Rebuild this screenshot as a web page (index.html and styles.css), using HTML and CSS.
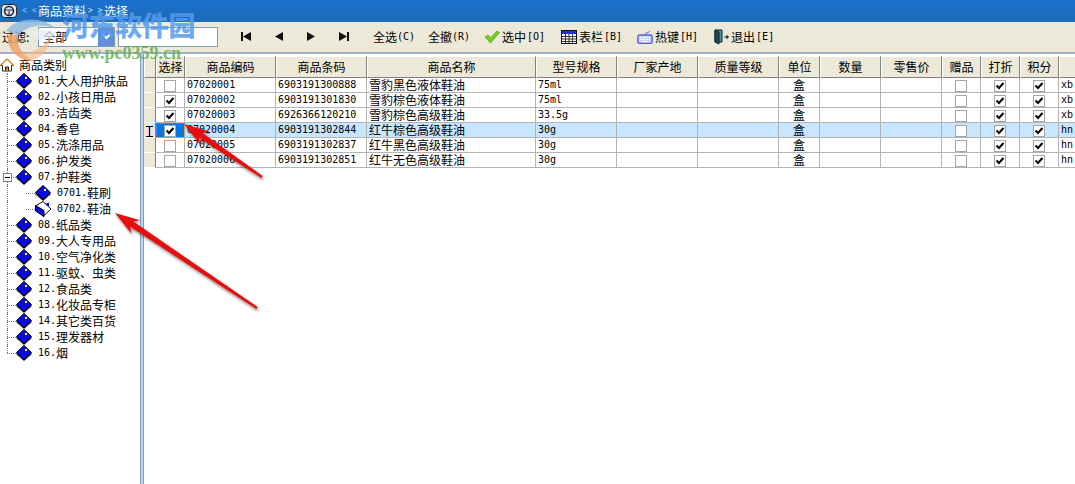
FILE: index.html
```html
<!DOCTYPE html>
<html lang="zh-CN">
<head>
<meta charset="utf-8">
<title>商品资料选择</title>
<link rel="stylesheet" href="styles.css">
</head>
<body>
<svg class="defs" width="0" height="0">
  <defs>
    <symbol id="gem" viewBox="0 0 18 16">
      <path d="M9 3 L17 9 L9 16 L1 9Z" fill="#222"/>
      <path d="M9 0.5 L16.5 7.5 L9 14.5 L1.5 7.5Z" fill="#0a0ae6" stroke="#000" stroke-width="1"/>
      <rect x="10" y="4" width="2" height="2" fill="#fff"/>
    </symbol>
    <symbol id="tick" viewBox="0 0 12 12">
      <rect x=".5" y=".5" width="11" height="11" fill="#fff" stroke="#a6a6a6"/>
      <path d="M2.5 5.5 L5 8 L9.5 3" fill="none" stroke="#000" stroke-width="2"/>
    </symbol>
    <symbol id="box" viewBox="0 0 12 12">
      <rect x=".5" y=".5" width="11" height="11" fill="#fff" stroke="#a6a6a6"/>
    </symbol>
  </defs>
</svg>

<header class="titlebar">
  <svg class="app-icon" width="16" height="14" viewBox="0 0 16 14"><rect x=".5" y=".5" width="15" height="13" rx="3" fill="#dfe6ee" stroke="#222"/><circle cx="8" cy="7" r="4.5" fill="none" stroke="#223" stroke-width="1.5"/><path d="M3.5 6h9M8 7v4" stroke="#223"/></svg>
  <span class="crumb-dim">&lt; &lt;</span><span class="zh">商品资料</span><span class="crumb-mid">&gt; &gt;</span><span class="zh">选择</span>
</header>

<div class="toolbar">
  <span class="zh filter-label">过滤:</span>
  <div class="combo"><span class="zh combo-text">全部</span><span class="combo-btn"><svg width="9" height="7" viewBox="0 0 9 7"><path d="M1 1.5 L4.5 5 L8 1.5" fill="none" stroke="#fff" stroke-width="2"/></svg></span></div>
  <div class="search"></div>
  <nav class="pager">
    <svg width="12" height="9" viewBox="0 0 12 9"><path d="M1 0h2v9H1zM11 0v9L3 4.500z" fill="#111"/></svg>
    <svg width="10" height="9" viewBox="0 0 10 9"><path d="M9 0v9L1 4.500z" fill="#111"/></svg>
    <svg width="10" height="9" viewBox="0 0 10 9"><path d="M1 0v9l8-4.500z" fill="#111"/></svg>
    <svg width="12" height="9" viewBox="0 0 12 9"><path d="M1 0v9l8-4.500zM9 0h2v9H9z" fill="#111"/></svg>
  </nav>
  <div class="actions">
    <span class="act"><span class="zh">全选</span><span class="lat">(C)</span></span>
    <span class="act"><span class="zh">全撤</span><span class="lat">(R)</span></span>
    <span class="act act-icon"><svg width="16" height="14" viewBox="0 0 16 14"><path d="M1 7 L4 5 L6.500 8 L13 1 L15.500 2.500 L6.500 13Z" fill="#6fd21e" stroke="#4a9c18" stroke-width=".7"/></svg><span class="zh">选中</span><span class="lat">[O]</span></span>
    <span class="act act-icon"><svg width="16" height="14" viewBox="0 0 16 14"><rect x=".5" y=".5" width="15" height="13" fill="#fff" stroke="#111"/><rect x="1" y="1" width="14" height="3" fill="#2230d8"/><path d="M1 6.500h14M1 9h14M1 11.500h14M4.500 4v9M8 4v9M11.500 4v9" stroke="#333"/></svg><span class="zh">表栏</span><span class="lat">[B]</span></span>
    <span class="act act-icon"><svg width="16" height="14" viewBox="0 0 16 14"><path d="M8 5 C8 2 11 4 13 1" fill="none" stroke="#5a66d0"/><rect x=".8" y="5" width="14.400" height="8.500" rx="2" fill="#c9d0f4" stroke="#5a66d0" stroke-width="1.400"/><path d="M3 7.500h10M3 9.500h10" stroke="#fff" stroke-dasharray="1.500 .7"/><path d="M5 11.500h6" stroke="#fff"/></svg><span class="zh">热键</span><span class="lat">[H]</span></span>
    <span class="act act-icon"><svg width="15" height="16" viewBox="0 0 15 16"><path d="M1 1h7v12H1z" fill="#4f8f96" stroke="#123"/><path d="M1 1l4 2v12l-4-2z" fill="#224a55" stroke="#123"/><path d="M10 7.500h2.500V5.500L15 8l-2.500 2.500v-2H10z" fill="#223"/></svg><span class="zh">退出</span><span class="lat">[E]</span></span>
  </div>
</div>

<main class="main">
  <aside class="tree">
    <div class="tree-root"><svg width="14" height="14" viewBox="0 0 14 14"><path d="M7 1 L13.500 7.500 H11.500 V13 H2.500 V7.500 H.5Z" fill="#fff" stroke="#222"/><path d="M5.500 13V9h3v4" fill="#e88a20" stroke="#222"/><path d="M7 1 L.5 7.500M7 1l6.500 6.500" stroke="#e0781c" stroke-width="1.400"/></svg><span class="zh">商品类别</span></div>
    <div class="node"><svg class="gem"><use href="#gem"/></svg><span class="lat">01.</span><span class="zh">大人用护肤品</span></div>
    <div class="node"><svg class="gem"><use href="#gem"/></svg><span class="lat">02.</span><span class="zh">小孩日用品</span></div>
    <div class="node"><svg class="gem"><use href="#gem"/></svg><span class="lat">03.</span><span class="zh">洁齿类</span></div>
    <div class="node"><svg class="gem"><use href="#gem"/></svg><span class="lat">04.</span><span class="zh">香皂</span></div>
    <div class="node"><svg class="gem"><use href="#gem"/></svg><span class="lat">05.</span><span class="zh">洗涤用品</span></div>
    <div class="node"><svg class="gem"><use href="#gem"/></svg><span class="lat">06.</span><span class="zh">护发类</span></div>
    <div class="node node-open"><span class="toggle"></span><svg class="gem"><use href="#gem"/></svg><span class="lat">07.</span><span class="zh">护鞋类</span></div>
    <div class="node child"><svg class="gem"><use href="#gem"/></svg><span class="lat">0701.</span><span class="zh">鞋刷</span></div>
    <div class="node child child-last"><svg class="gem" viewBox="0 0 18 16"><path d="M1.500 5 L9 .5 L17 8 L9 15.500Z" fill="#fff" stroke="#000"/><path d="M1.500 4.500 L10 9.500 L10 15.500 L1.500 10Z" fill="#0a0ae6" stroke="#000"/><path d="M11 3l4-1.500v4z" fill="#0a0ae6"/></svg><span class="lat">0702.</span><span class="zh">鞋油</span></div>
    <div class="node"><svg class="gem"><use href="#gem"/></svg><span class="lat">08.</span><span class="zh">纸品类</span></div>
    <div class="node"><svg class="gem"><use href="#gem"/></svg><span class="lat">09.</span><span class="zh">大人专用品</span></div>
    <div class="node"><svg class="gem"><use href="#gem"/></svg><span class="lat">10.</span><span class="zh">空气净化类</span></div>
    <div class="node"><svg class="gem"><use href="#gem"/></svg><span class="lat">11.</span><span class="zh">驱蚊、虫类</span></div>
    <div class="node"><svg class="gem"><use href="#gem"/></svg><span class="lat">12.</span><span class="zh">食品类</span></div>
    <div class="node"><svg class="gem"><use href="#gem"/></svg><span class="lat">13.</span><span class="zh">化妆品专柜</span></div>
    <div class="node"><svg class="gem"><use href="#gem"/></svg><span class="lat">14.</span><span class="zh">其它类百货</span></div>
    <div class="node"><svg class="gem"><use href="#gem"/></svg><span class="lat">15.</span><span class="zh">理发器材</span></div>
    <div class="node node-last"><svg class="gem"><use href="#gem"/></svg><span class="lat">16.</span><span class="zh">烟</span></div>
  </aside>
  <div class="splitter"></div>
  <section class="grid-wrap">
    <table class="grid">
      <colgroup>
        <col class="c-ind"><col class="c-sel"><col class="c-code"><col class="c-code"><col class="c-name"><col class="c-spec"><col class="c-spec"><col class="c-spec"><col class="c-unit"><col class="c-qty"><col class="c-qty"><col class="c-flag"><col class="c-flag"><col class="c-flag"><col class="c-end">
      </colgroup>
      <thead>
        <tr><th></th><th>选择</th><th>商品编码</th><th>商品条码</th><th>商品名称</th><th>型号规格</th><th>厂家产地</th><th>质量等级</th><th>单位</th><th>数量</th><th>零售价</th><th>赠品</th><th>打折</th><th>积分</th><th></th></tr>
      </thead>
      <tbody>
        <tr><td class="ind"></td><td class="mid"><svg class="cb"><use href="#box"/></svg></td><td class="lat">07020001</td><td class="lat">6903191300888</td><td class="zh">雪豹黑色液体鞋油</td><td class="lat">75ml</td><td></td><td></td><td class="mid zh">盒</td><td></td><td></td><td class="mid"><svg class="cb"><use href="#box"/></svg></td><td class="mid"><svg class="cb"><use href="#tick"/></svg></td><td class="mid"><svg class="cb"><use href="#tick"/></svg></td><td class="lat">xb</td></tr>
        <tr><td class="ind"></td><td class="mid"><svg class="cb"><use href="#tick"/></svg></td><td class="lat">07020002</td><td class="lat">6903191301830</td><td class="zh">雪豹棕色液体鞋油</td><td class="lat">75ml</td><td></td><td></td><td class="mid zh">盒</td><td></td><td></td><td class="mid"><svg class="cb"><use href="#box"/></svg></td><td class="mid"><svg class="cb"><use href="#tick"/></svg></td><td class="mid"><svg class="cb"><use href="#tick"/></svg></td><td class="lat">xb</td></tr>
        <tr><td class="ind"></td><td class="mid"><svg class="cb"><use href="#tick"/></svg></td><td class="lat">07020003</td><td class="lat">6926366120210</td><td class="zh">雪豹棕色高级鞋油</td><td class="lat">33.5g</td><td></td><td></td><td class="mid zh">盒</td><td></td><td></td><td class="mid"><svg class="cb"><use href="#box"/></svg></td><td class="mid"><svg class="cb"><use href="#tick"/></svg></td><td class="mid"><svg class="cb"><use href="#tick"/></svg></td><td class="lat">xb</td></tr>
        <tr class="selected"><td class="ind"><svg width="7" height="11" viewBox="0 0 7 11"><path d="M0 .5h7M0 10.500h7M3.500 0v11" stroke="#000" stroke-width="1.200"/></svg></td><td class="mid focus"><svg class="cb"><use href="#tick"/></svg></td><td class="lat">07020004</td><td class="lat">6903191302844</td><td class="zh">红牛棕色高级鞋油</td><td class="lat">30g</td><td></td><td></td><td class="mid zh">盒</td><td></td><td></td><td class="mid"><svg class="cb"><use href="#box"/></svg></td><td class="mid"><svg class="cb"><use href="#tick"/></svg></td><td class="mid"><svg class="cb"><use href="#tick"/></svg></td><td class="lat">hn</td></tr>
        <tr><td class="ind"></td><td class="mid"><svg class="cb"><use href="#box"/></svg></td><td class="lat">07020005</td><td class="lat">6903191302837</td><td class="zh">红牛黑色高级鞋油</td><td class="lat">30g</td><td></td><td></td><td class="mid zh">盒</td><td></td><td></td><td class="mid"><svg class="cb"><use href="#box"/></svg></td><td class="mid"><svg class="cb"><use href="#tick"/></svg></td><td class="mid"><svg class="cb"><use href="#tick"/></svg></td><td class="lat">hn</td></tr>
        <tr><td class="ind"></td><td class="mid"><svg class="cb"><use href="#box"/></svg></td><td class="lat">07020006</td><td class="lat">6903191302851</td><td class="zh">红牛无色高级鞋油</td><td class="lat">30g</td><td></td><td></td><td class="mid zh">盒</td><td></td><td></td><td class="mid"><svg class="cb"><use href="#box"/></svg></td><td class="mid"><svg class="cb"><use href="#tick"/></svg></td><td class="mid"><svg class="cb"><use href="#tick"/></svg></td><td class="lat">hn</td></tr>
      </tbody>
    </table>
  </section>
</main>

<div class="watermark">
  <svg class="wm-logo" width="60" height="50" viewBox="0 0 60 50"><path d="M6 16 C16 2 42 0 56 14 C44 8 28 10 18 20Z" fill="#8fb6e2" opacity=".8"/><path d="M30 16 C40 14 50 14 56 18 C52 24 44 26 36 24Z" fill="#e8eef6" opacity=".75"/><path d="M8 20 C6 34 18 47 36 46 C24 42 16 32 18 20Z" fill="#f0a368" opacity=".85"/><path d="M22 38 C34 38 44 32 50 22 C50 34 40 46 28 45Z" fill="#f4b98a" opacity=".65"/></svg>
  <span class="wm-name">河东软件园</span>
  <span class="wm-url">www.pc0359.cn</span>
</div>

<svg class="arrows" width="1075" height="484" viewBox="0 0 1075 484">
  <defs><filter id="sh" x="-20%" y="-20%" width="140%" height="140%"><feDropShadow dx="1" dy="2" stdDeviation="1.500" flood-color="#000" flood-opacity=".5"/></filter></defs>
  <polygon filter="url(#sh)" fill="#e81010" points="184,124 209.200,131.400 202.200,132.700 262.700,176 261.300,178 198.800,137.700 200.200,144.600"/>
  <polygon filter="url(#sh)" fill="#e81010" points="115,213 140.200,220.300 133.300,221.600 257.700,307 256.300,309 129.900,226.600 131.400,233.500"/>
</svg>
</body>
</html>
```
FILE: styles.css
```css
* { box-sizing: border-box; }
html, body { margin: 0; padding: 0; }
body {
  width: 1075px;
  height: 484px;
  overflow: hidden;
  background: #fff;
  color: #000;
  position: relative;
  font-family: "Noto Sans CJK SC", "DejaVu Sans Mono", sans-serif;
  font-size: 12px;
  line-height: 14px;
}
.defs { position: absolute; }
.zh { font-family: "Noto Sans CJK SC", sans-serif; font-size: 12px; }
.lat { font-family: "DejaVu Sans Mono", monospace; font-size: 10px; }

/* title bar */
.titlebar {
  height: 22px;
  display: flex;
  align-items: center;
  padding-left: 1px;
  color: #fff;
  background: linear-gradient(#1870d0, #1f6cb8);
}
.app-icon { margin-right: 5px; flex: none; }
.crumb-dim { font-family: "DejaVu Sans Mono", monospace; font-size: 8px; color: #9cc4ec; white-space: pre; width: 16px; flex: none; }
.crumb-mid { font-family: "DejaVu Sans Mono", monospace; font-size: 8px; color: #cfe2f6; white-space: pre; width: 16px; margin-left: 2px; flex: none; }

/* toolbar */
.toolbar {
  height: 32px;
  display: flex;
  align-items: center;
  background: #ece9d8;
  border-bottom: 2px solid #a4b0c4;
  padding-bottom: 1px;
}
.filter-label { width: 38px; padding-left: 2px; flex: none; }
.combo {
  width: 77px;
  height: 20px;
  display: flex;
  align-items: center;
  justify-content: space-between;
  background: #fff;
  border: 1px solid #7f9db9;
  flex: none;
}
.combo-text { padding-left: 4px; }
.combo-btn {
  width: 16px;
  height: 18px;
  display: flex;
  align-items: center;
  justify-content: center;
  background: #5f8fd8;
}
.search {
  width: 100px;
  height: 20px;
  margin-left: 3px;
  background: #fff;
  border: 1px solid #7f9db9;
  flex: none;
}
.pager {
  display: flex;
  align-items: center;
  gap: 22px;
  margin-left: 22px;
  width: 133px;
  flex: none;
}
.actions { display: flex; align-items: center; gap: 13px; }
.act { display: flex; align-items: center; white-space: nowrap; }
.act .lat { font-size: 10px; width: 18px; }
.act-icon { gap: 1px; }
.act-icon svg { margin-right: 1px; }
.actions .act:nth-child(3) { margin-left: 1px; }
.actions .act:nth-child(4) { margin-left: 3px; }
.actions .act:nth-child(5) { margin-left: 2px; }
.actions .act:nth-child(6) { margin-left: 3px; }

/* main */
.main { display: flex; height: 430px; }
.tree {
  width: 140px;
  flex: none;
  padding-top: 3px;
  overflow: hidden;
  white-space: nowrap;
}
.tree-root {
  height: 16px;
  display: flex;
  align-items: center;
  gap: 5px;
}
.node {
  height: 16px;
  display: flex;
  align-items: center;
  padding-left: 15px;
  position: relative;
}
.node::before {
  content: "";
  position: absolute;
  left: 7px;
  top: 0;
  bottom: 0;
  border-left: 1px dotted #777;
}
.node::after {
  content: "";
  position: absolute;
  left: 7px;
  top: 8px;
  width: 9px;
  border-top: 1px dotted #777;
}
.node-last::before { bottom: 8px; }
.node .gem { width: 18px; height: 16px; margin-right: 5px; flex: none; position: relative; z-index: 1; }
.node .lat { font-size: 10px; }
.child { padding-left: 34px; }
.child::after { left: 26px; }
.node.child { background-image: radial-gradient(#777 0.5px, transparent 0.6px); background-size: 2px 2px; background-position: 26px 0; background-repeat: repeat-y; }
.node.child-last { background-position: 26px -8px; }
.toggle {
  position: absolute;
  left: 3px;
  top: 4px;
  width: 9px;
  height: 9px;
  background: #fff;
  border: 1px solid #808080;
  z-index: 1;
}
.toggle::after {
  content: "";
  position: absolute;
  left: 1px;
  top: 3px;
  width: 5px;
  height: 1px;
  background: #000;
}
.splitter {
  width: 4px;
  flex: none;
  background: #c4d8f0;
  border-left: 1px solid #7f9ab8;
  border-right: 1px solid #7f9ab8;
}

/* data grid */
.grid-wrap { flex: 1; overflow: hidden; padding-top: 2px; min-width: 0; }
.grid {
  table-layout: fixed;
  width: 955px;
  border-collapse: separate;
  border-spacing: 0;
}
.c-ind { width: 12px; }
.c-sel { width: 29px; }
.c-code { width: 91px; }
.c-name { width: 169px; }
.c-spec { width: 81px; }
.c-unit { width: 41px; }
.c-qty { width: 61px; }
.c-flag { width: 39px; }
.c-end { width: 40px; }
.grid th {
  height: 22px;
  padding: 0 0 1px;
  font-weight: 400;
  font-family: "Noto Sans CJK SC", sans-serif;
  font-size: 12px;
  text-align: center;
  background: #ece9d8;
  border-top: 1px solid #fff;
  border-left: 1px solid #fff;
  border-right: 1px solid #808080;
  border-bottom: 1px solid #808080;
}
.grid td {
  height: 15px;
  padding: 0 0 0 2px;
  border-right: 1px solid #b4b4b4;
  border-bottom: 1px solid #b4b4b4;
  line-height: 14px;
  white-space: nowrap;
}
.grid td.mid { text-align: center; padding: 0; }
.grid td.ind {
  padding: 0;
  background: #ece9d8;
  text-align: center;
  border-bottom-color: #fff;
  border-right-color: #808080;
}
.grid td.ind svg { display: block; margin: 2px auto 0; }
.cb { width: 12px; height: 12px; display: block; margin: 1px auto 0; }
.selected td { background: #c8e6ff; }
.grid td.focus {
  background: #0a78d8;
  outline: 1px dotted #f08020;
  outline-offset: -1px;
}

/* decorations laid over the capture */
.watermark {
  position: absolute;
  left: 0;
  top: 12px;
  width: 200px;
  height: 52px;
  pointer-events: none;
}
.wm-logo { position: absolute; left: 0; top: 3px; }
.wm-name {
  position: absolute;
  left: 62px;
  top: -1px;
  font-family: "Noto Sans CJK SC", sans-serif;
  font-size: 27px;
  font-weight: 900;
  line-height: 28px;
  letter-spacing: -0.4px;
  color: rgba(85, 155, 238, 0.85);
}
.wm-url {
  position: absolute;
  left: 62px;
  top: 32px;
  font-family: "Liberation Serif", serif;
  font-size: 18px;
  font-weight: 700;
  line-height: 18px;
  color: rgba(90, 175, 70, 0.8);
}
.arrows { position: absolute; left: 0; top: 0; pointer-events: none; }
```
